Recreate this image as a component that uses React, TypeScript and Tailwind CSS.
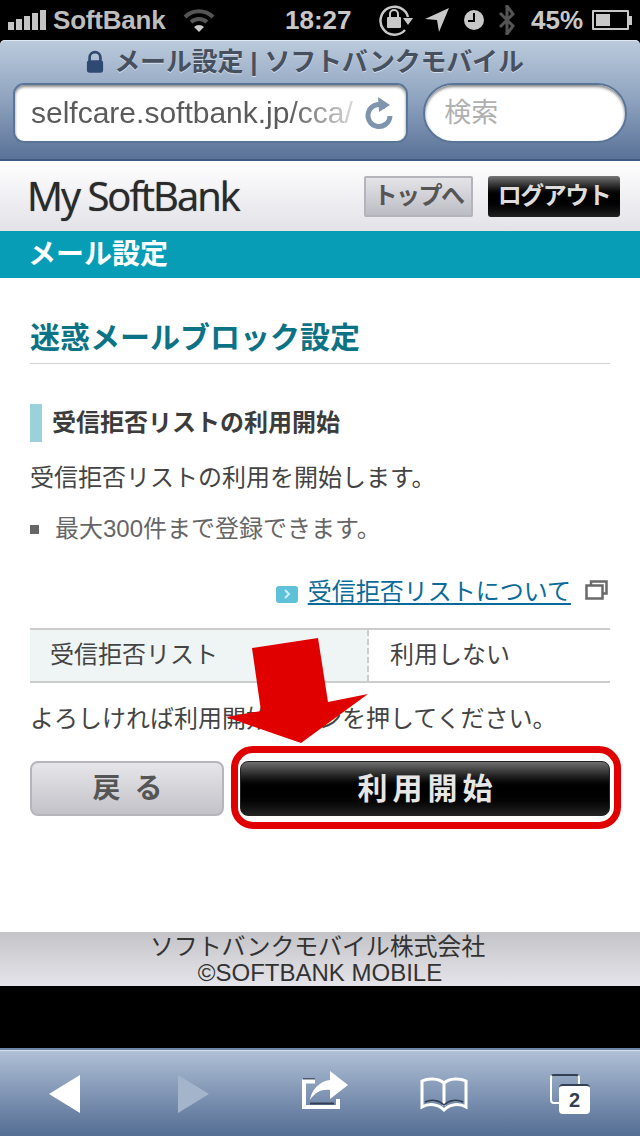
function SignalBars() {
  return (
    <div className="flex items-end gap-[2px] h-[20px]">
      <div className="w-[6px] h-[8px] bg-[#c4c4c4]" />
      <div className="w-[6px] h-[11px] bg-[#c4c4c4]" />
      <div className="w-[6px] h-[14px] bg-[#c4c4c4]" />
      <div className="w-[6px] h-[17px] bg-[#c4c4c4]" />
      <div className="w-[6px] h-[20px] bg-[#c4c4c4]" />
    </div>
  );
}

function StatusBar() {
  return (
    <div className="h-[40px] bg-black flex items-center text-[#c8c8c8] pl-[8px]">
      <SignalBars />
      <span className="ml-[7px] w-[120px] text-[26px] font-bold leading-[40px] tracking-[-0.2px] text-[#bdbdbd]">SoftBank</span>
      <svg className="ml-[10px]" width="32" height="24" viewBox="0 0 32 24">
        <path d="M2 9 A20 20 0 0 1 30 9" fill="none" stroke="#555" strokeWidth="4" />
        <path d="M8 14 A12 12 0 0 1 24 14" fill="none" stroke="#555" strokeWidth="4" />
        <path d="M11 19 A7 7 0 0 1 21 19 L16 24 Z" fill="#c8c8c8" />
      </svg>
      <span className="ml-[70px] w-[70px] text-[26px] font-bold leading-[40px] text-[#c8c8c8]">18:27</span>
      <svg className="ml-[22px]" width="38" height="32" viewBox="0 0 38 32">
        <path d="M28 26 A14 14 0 1 1 31 13" fill="none" stroke="#c8c8c8" strokeWidth="2.5" />
        <path d="M26 14 L36 14 L31 21 Z" fill="#c8c8c8" />
        <rect x="10" y="13" width="14" height="11" rx="1" fill="#c8c8c8" />
        <path d="M13 13 V10 A4 4 0 0 1 21 10 V13" fill="none" stroke="#c8c8c8" strokeWidth="2" />
      </svg>
      <svg className="ml-[10px]" width="24" height="24" viewBox="0 0 24 24">
        <path d="M0 11 L24 0 L14 24 L12 12 Z" fill="#c8c8c8" />
      </svg>
      <svg className="ml-[15px]" width="20" height="20" viewBox="0 0 20 20">
        <circle cx="10" cy="10" r="10" fill="#c8c8c8" />
        <path d="M10 3 V11 H4" fill="none" stroke="#000" strokeWidth="2" />
      </svg>
      <svg className="ml-[14px]" width="18" height="30" viewBox="0 0 18 30">
        <path d="M2 8 L15 21 L9 29 V1 L15 9 L2 22" fill="none" stroke="#555" strokeWidth="3" />
      </svg>
      <span className="ml-[15px] w-[53px] text-[26px] font-bold leading-[40px] text-[#c8c8c8]">45%</span>
      <div className="ml-[8px] flex items-center">
        <div className="w-[37px] h-[20px] border-2 border-[#c8c8c8] p-[2px] rounded-[1px]">
          <div className="w-[14px] h-full bg-[#c8c8c8]" />
        </div>
        <div className="w-[3px] h-[9px] bg-[#c8c8c8]" />
      </div>
    </div>
  );
}

function SafariHeader() {
  return (
    <div className="h-[121px] rounded-t-[5px] bg-linear-to-b from-[#bccbdd] via-[#8ea3bf] to-[#5a7298] border-b-2 border-[#3f5a82] shadow-[inset_0_1px_0_#dfe7f0] px-[13px]">
      <div className="h-[43px] flex items-center justify-center gap-[10px] pr-[30px]">
        <svg width="18" height="24" viewBox="0 0 20 26">
          <path d="M4 12 V8 A6 6 0 0 1 16 8 V12" fill="none" stroke="#2f4a72" strokeWidth="3" />
          <rect x="1" y="11" width="18" height="14" rx="3" fill="#2f4a72" />
        </svg>
        <span className="text-[26px] font-bold leading-[32px] tracking-[-0.2px] text-[#46505e] [text-shadow:0_1px_0_#d5deea]">メール設定 | ソフトバンクモバイル</span>
      </div>
      <div className="flex gap-[15px]">
        <div className="w-[396px] h-[60px] bg-white rounded-[11px] border-2 border-[#5b7598] shadow-[inset_0_2px_3px_#888] flex items-center pl-[16px] pr-[12px] overflow-hidden">
          <span className="w-[330px] whitespace-nowrap overflow-hidden text-[30px] leading-[36px] text-[#5b5b5b] [mask-image:linear-gradient(to_right,#000_78%,#0002)]">selfcare.softbank.jp/cca/</span>
          <svg className="ml-[4px]" width="28" height="34" viewBox="0 0 28 34">
            <path d="M21 11 A11 11 0 1 0 25 20" fill="none" stroke="#7f94ad" strokeWidth="5" />
            <path d="M13 1 L25 9 L14 16 Z" fill="#7f94ad" />
          </svg>
        </div>
        <div className="w-[204px] h-[60px] bg-white rounded-full border-2 border-[#5b7598] shadow-[inset_0_2px_3px_#888] flex items-center pl-[19px]">
          <span className="text-[27px] leading-[36px] text-[#b0b0b0]">検索</span>
        </div>
      </div>
    </div>
  );
}

function SiteHeader() {
  return (
    <>
      <div className="h-[70px] bg-linear-to-b from-white to-[#e2e2e8] flex items-center pl-[27px] pr-[20px]">
        <span className="text-[40px] leading-[48px] tracking-[-2px] text-[#2a2a2a] font-['Open_Sans','Liberation_Sans',sans-serif] [text-shadow:0_0_1px_#555]">My SoftBank</span>
        <div className="ml-auto flex gap-[15px]">
          <div className="w-[109px] h-[41px] flex items-center justify-center rounded-[2px] border-2 border-[#b4b4bc] bg-linear-to-b from-[#e4e4e8] to-[#bcbcc4] text-[24px] font-bold tracking-[-1.5px] text-[#555]">トップへ</div>
          <div className="w-[132px] h-[41px] flex items-center justify-center rounded-[3px] bg-linear-to-b from-[#777] via-black to-[#222] text-[24px] font-bold tracking-[-1.5px] text-[#ddd]">ログアウト</div>
        </div>
      </div>
      <div className="h-[47px] bg-[#079db7] pl-[28px] flex items-center text-[28px] font-bold text-white">メール設定</div>
    </>
  );
}

function ExternalIcon() {
  return (
    <svg className="ml-[14px] mb-[4px]" width="23" height="20" viewBox="0 0 23 20">
      <rect x="6" y="1.5" width="15.5" height="12" fill="#fff" stroke="#6a6a6a" strokeWidth="2.5" />
      <rect x="1.5" y="5.5" width="16" height="13" fill="#fff" stroke="#6a6a6a" strokeWidth="2.5" />
    </svg>
  );
}

function Main() {
  return (
    <div className="flex-1 bg-white px-[30px] pt-[41px] text-[#444]">
      <h2 className="text-[30px] leading-[38px] font-bold text-[#0b7385] pb-[6px] border-b border-[#d4d4d4] whitespace-nowrap">迷惑メールブロック設定</h2>
      <div className="mt-[40px] h-[38px] border-l-[12px] border-[#9ad1dc] pl-[10px] flex items-center text-[24px] font-bold text-[#3c3c3c]">受信拒否リストの利用開始</div>
      <p className="mt-[20px] text-[24px] leading-[32px]">受信拒否リストの利用を開始します。</p>
      <div className="mt-[19px] flex items-center text-[24px] leading-[32px] text-[#666]">
        <div className="w-[9px] h-[9px] bg-[#666] mr-[16px]" />
        <span>最大300件まで登録できます。</span>
      </div>
      <div className="mt-[31px] h-[32px] flex items-center justify-end pr-[2px]">
        <div className="w-[22px] h-[17px] rounded-[3px] bg-[#5fc0da] flex items-center justify-center mr-[10px] mt-[4px]">
          <svg width="8" height="10" viewBox="0 0 8 10">
            <path d="M2 1 L6 5 L2 9" fill="none" stroke="#cdeef6" strokeWidth="2" />
          </svg>
        </div>
        <span className="text-[24px] leading-[30px] text-[#0a6a9a] underline underline-offset-[3px]">受信拒否リストについて</span>
        <ExternalIcon />
      </div>
      <div className="mt-[20px] h-[55px] border-y-2 border-[#cccccc] flex text-[24px]">
        <div className="w-[339px] bg-[#eff4f4] border-r-2 border-dashed border-[#cccccc] pl-[20px] pb-[1px] flex items-center">受信拒否リスト</div>
        <div className="pl-[21px] pb-[1px] flex items-center">利用しない</div>
      </div>
      <p className="mt-[20px] text-[24px] leading-[32px] whitespace-nowrap">よろしければ利用開始ボタンを押してください。</p>
      <div className="relative mt-[26px] flex gap-[16px]">
        <button className="w-[194px] h-[55px] pl-[4px] rounded-[8px] border-2 border-[#b5b5bb] bg-linear-to-b from-[#e6e6ea] to-[#c2c2c8] text-[28px] font-bold tracking-[3px] text-[#555]">戻 る</button>
        <button className="w-[370px] h-[55px] pl-[5px] rounded-[8px] border border-[#222] bg-linear-to-b from-[#707070] via-black via-50% to-[#222] text-[30px] font-bold tracking-[5px] text-[#e6e6e6]">利用開始</button>
        <div className="absolute left-[201px] top-[-15px] w-[390px] h-[83px] rounded-[22px] border-[7px] border-[#e00000]" />
      </div>
    </div>
  );
}

function Footer() {
  return (
    <div className="h-[54px] pt-[2px] bg-linear-to-b from-[#c4c4c8] to-[#e4e4ea] flex flex-col items-center justify-center text-[24px] leading-[26px] text-[#333]">
      <span className="pr-[5px] tracking-[-0.15px]">ソフトバンクモバイル株式会社</span>
      <span>©SOFTBANK MOBILE</span>
    </div>
  );
}

function Toolbar() {
  return (
    <div className="h-[88px] bg-linear-to-b from-[#b1c1d7] to-[#546d93] border-t-2 border-[#6d86a6] shadow-[inset_0_1px_0_#d6e0ec] flex items-center pl-[49px] pt-[1px]">
      <svg width="31" height="38" viewBox="0 0 31 38">
        <path d="M31 0 V38 L0 19 Z" fill="#fff" />
      </svg>
      <svg className="ml-[98px]" width="31" height="38" viewBox="0 0 31 38">
        <path d="M0 0 V38 L31 19 Z" fill="#a3b4cb" />
      </svg>
      <svg className="ml-[93px] mb-[5px]" width="48" height="40" viewBox="0 0 48 40">
        <path d="M1 8 H13" stroke="#333f52" strokeWidth="1.5" />
        <path d="M13 10.5 H2 V36 H36 V28" fill="none" stroke="#fff" strokeWidth="4" />
        <path d="M8 32.5 H32" stroke="#333f52" strokeWidth="2" />
        <path d="M8 29 C9 20 17 10 28 9 V0 L46 14 L28 28 V19 C20 18 13 21 8 29 Z" fill="#fff" />
      </svg>
      <svg className="ml-[70px]" width="48" height="36" viewBox="0 0 48 36">
        <path d="M24 7 C18 2 8 2 2 5 V31 C9 27 18 28 24 34 C30 28 39 27 46 31 V5 C40 2 30 2 24 7 Z M24 7 V30" fill="none" stroke="#fff" strokeWidth="3" />
        <path d="M5 26 C11 23 19 24 24 29 C29 24 37 23 43 26" fill="none" stroke="#333f52" strokeWidth="1.5" />
      </svg>
      <div className="relative ml-[82px] w-[41px] h-[40px]">
        <div className="absolute left-0 top-0 w-[30px] h-[30px] rounded-[4px] border-2 border-white border-t-[#333f52]" />
        <div className="absolute left-[9px] top-[10px] w-[31px] h-[30px] rounded-[4px] bg-white border-t-2 border-[#333f52] flex items-center justify-center text-[20px] font-bold text-[#333f52]">2</div>
      </div>
    </div>
  );
}

export default function App() {
  return (
    <div className="relative w-[640px] h-[1136px] overflow-hidden bg-black flex flex-col font-['Liberation_Sans','Noto_Sans_CJK_JP',sans-serif]">
      <StatusBar />
      <SafariHeader />
      <SiteHeader />
      <Main />
      <Footer />
      <div className="h-[62px] bg-black" />
      <Toolbar />
      {/* red arrow drawn over the page */}
      <svg className="absolute left-[224px] top-[638px]" width="145" height="106" viewBox="224 638 145 106">
        <path d="M252 648 L318 638 L328 702 L368 694 L301 743 L226 717 L261 711 Z" fill="#e00000" />
      </svg>
    </div>
  );
}
